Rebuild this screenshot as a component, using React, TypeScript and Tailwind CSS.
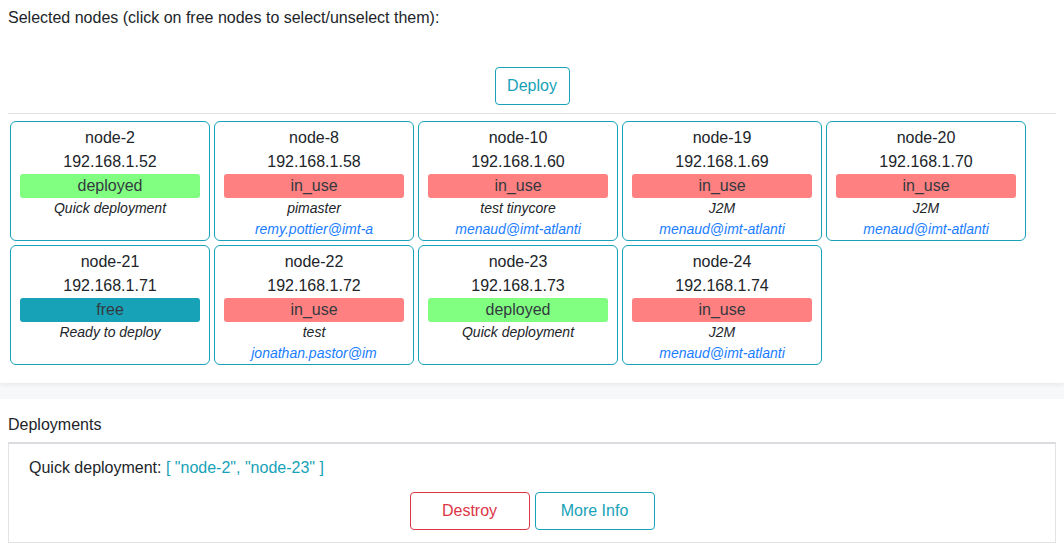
import React from 'react';

type Status = 'deployed' | 'in_use' | 'free';

type Node = {
  name: string;
  ip: string;
  status: Status;
  desc: string;
  email?: string;
};

const nodes: Node[] = [
  { name: 'node-2', ip: '192.168.1.52', status: 'deployed', desc: 'Quick deployment' },
  { name: 'node-8', ip: '192.168.1.58', status: 'in_use', desc: 'pimaster', email: 'remy.pottier@imt-atlantique.fr' },
  { name: 'node-10', ip: '192.168.1.60', status: 'in_use', desc: 'test tinycore', email: 'menaud@imt-atlantique.fr' },
  { name: 'node-19', ip: '192.168.1.69', status: 'in_use', desc: 'J2M', email: 'menaud@imt-atlantique.fr' },
  { name: 'node-20', ip: '192.168.1.70', status: 'in_use', desc: 'J2M', email: 'menaud@imt-atlantique.fr' },
  { name: 'node-21', ip: '192.168.1.71', status: 'free', desc: 'Ready to deploy' },
  { name: 'node-22', ip: '192.168.1.72', status: 'in_use', desc: 'test', email: 'jonathan.pastor@imt-atlantique.fr' },
  { name: 'node-23', ip: '192.168.1.73', status: 'deployed', desc: 'Quick deployment' },
  { name: 'node-24', ip: '192.168.1.74', status: 'in_use', desc: 'J2M', email: 'menaud@imt-atlantique.fr' },
];

const statusClass: Record<Status, string> = {
  deployed: 'bg-[#80ff80]',
  in_use: 'bg-[#ff8080]',
  free: 'bg-[#17a2b8]',
};

function NodeCard({ node }: { node: Node }) {
  return (
    <div className="m-[2px] w-[200px] h-[120px] rounded-md border border-[#17a2b8] px-[9px] pt-1 text-center">
      <div className="text-base leading-6">{node.name}</div>
      <div className="text-base leading-6">{node.ip}</div>
      <div className={`h-6 rounded-[3px] text-base leading-6 text-[#343a40] ${statusClass[node.status]}`}>
        {node.status}
      </div>
      <div className="text-sm leading-[21px] italic">{node.desc}</div>
      {node.email && (
        // emails are cut to 18 characters
        <div className="text-sm leading-[21px] italic text-[#1a7dff]">{node.email.substring(0, 18)}</div>
      )}
    </div>
  );
}

export default function App() {
  return (
    <div className="w-[1064px] h-[552px] overflow-hidden bg-white text-[#212529] font-['Liberation_Sans',Arial,sans-serif]">
      {/* Node selection */}
      <div className="relative z-10 bg-white px-2 pt-[6px] pb-4 shadow-[0_2px_4px_rgba(0,0,0,0.06)]">
        <div className="text-base leading-6">Selected nodes (click on free nodes to select/unselect them):</div>
        <div className="mt-[37px] flex justify-center">
          <button className="h-[38px] w-[75px] rounded border border-[#17a2b8] text-base text-[#17a2b8]">Deploy</button>
        </div>
        <div className="mt-2 h-px bg-[#e3e3e3]" />
        <div className="mt-[5px] flex flex-wrap">
          {nodes.map((n) => (
            <NodeCard key={n.name} node={n} />
          ))}
        </div>
      </div>

      <div className="h-4 bg-[#f7f8f9]" />

      {/* Deployments */}
      <div className="px-2 pt-[14px]">
        <div className="text-base leading-6">Deployments</div>
        <div className="mt-[5px] border border-t-2 border-[#e3e3e3] border-t-[#dcdce0] px-5 pt-3 pb-3">
          <div className="text-base leading-6">
            Quick deployment: <span className="text-[#17a2b8]">[ "node-2", "node-23" ]</span>
          </div>
          <div className="mt-3 flex justify-center gap-[5px]">
            <button className="h-[38px] w-[120px] rounded border border-[#dc3545] text-base text-[#dc3545]">Destroy</button>
            <button className="h-[38px] w-[120px] rounded border border-[#17a2b8] text-base text-[#17a2b8]">More Info</button>
          </div>
        </div>
      </div>
    </div>
  );
}
